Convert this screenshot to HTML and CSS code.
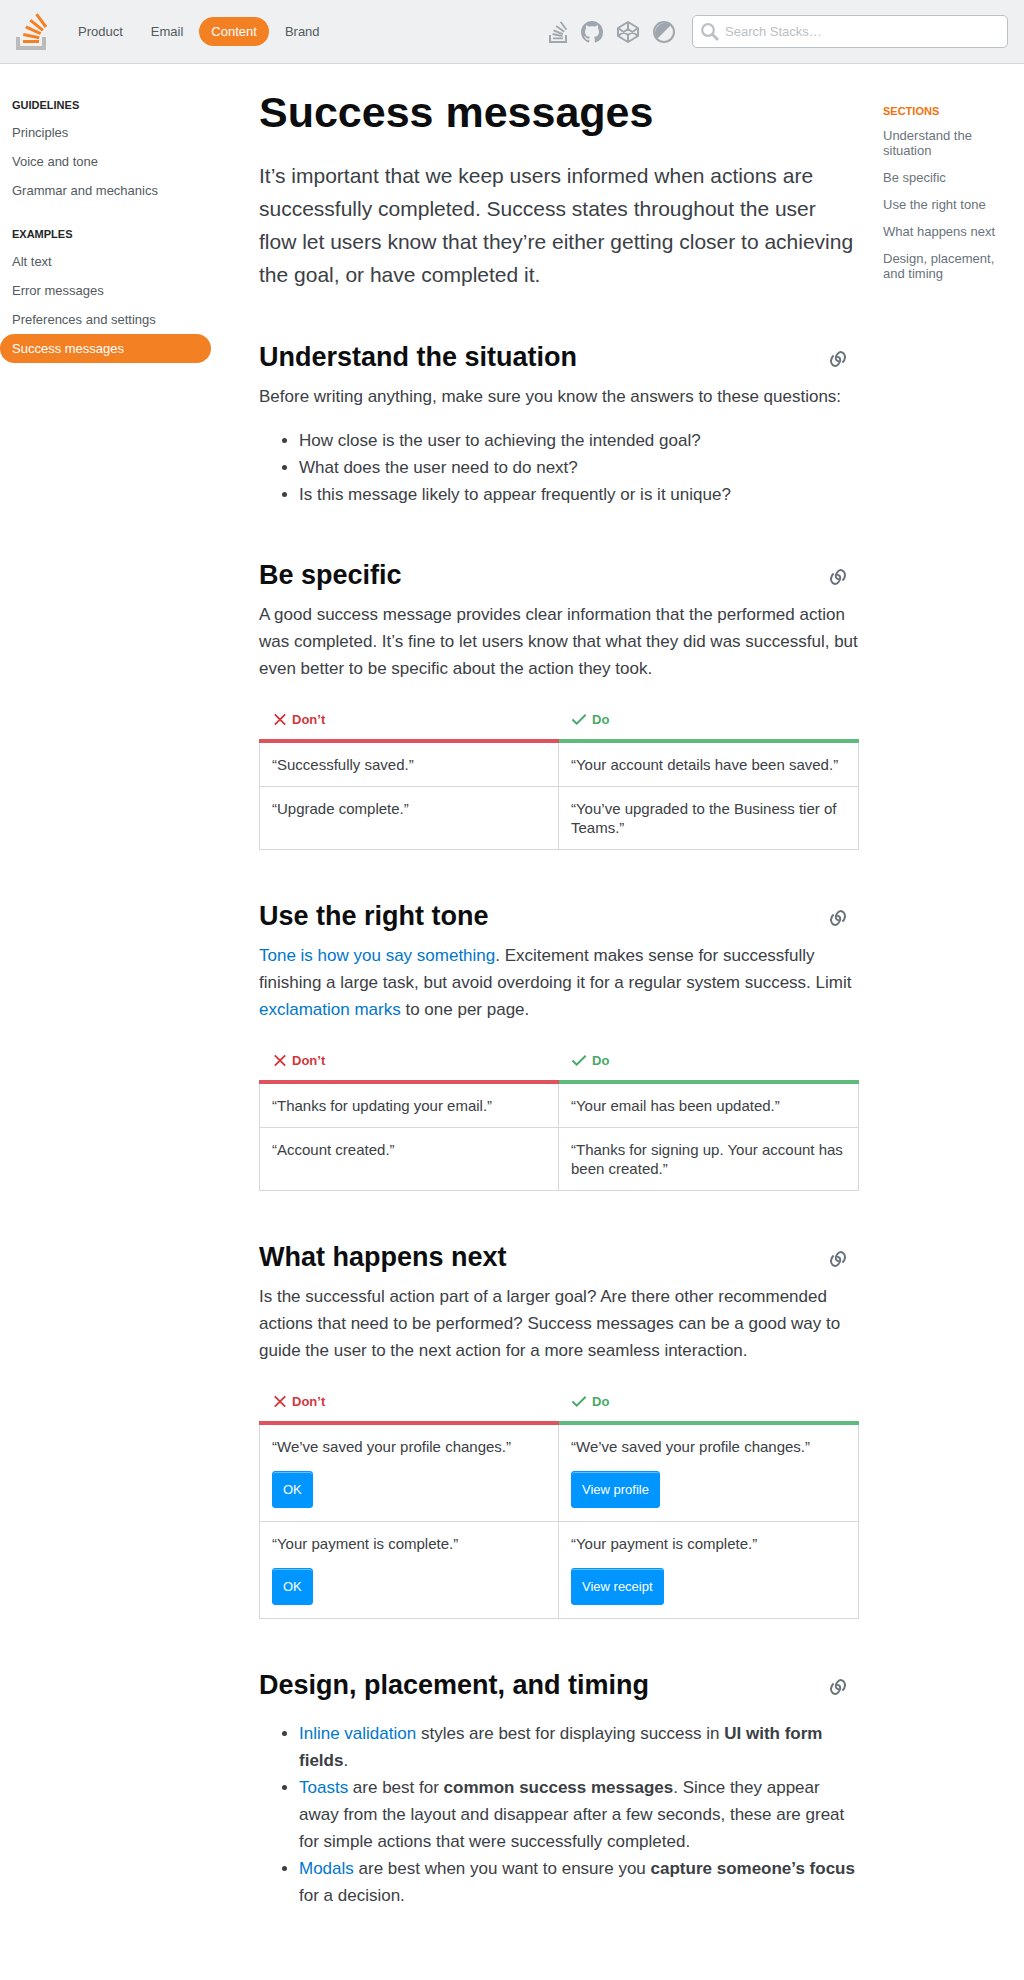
FILE: index.html
```html
<!DOCTYPE html>
<html lang="en">
<head>
<meta charset="utf-8">
<meta name="viewport" content="width=device-width, initial-scale=1">
<title>Success messages - Stacks</title>
<link rel="stylesheet" href="styles.css">
</head>
<body>
<svg class="sprite" aria-hidden="true">
  <symbol id="link" viewBox="0 0 16 18">
    <g fill="none" stroke="currentColor" stroke-width="2">
      <path d="M12.400 12.600C14.600 10.600 15.400 7.400 14.600 5 13.400 1.800 10.200 1.200 8 3.400 5.800 5.600 5 8.800 6.800 10.400 7.400 11 8.200 11.200 9 10.800"/>
      <path d="M3.600 5.400C1.400 7.400 .6 10.600 1.400 13 2.600 16.200 5.800 16.800 8 14.600 10.200 12.400 11 9.200 9.200 7.600 8.600 7 7.800 6.800 7 7.200"/>
    </g>
  </symbol>
  <symbol id="cross" viewBox="0 0 18 18"><path d="M3.500 3.500 14.500 14.500M14.500 3.500 3.500 14.500" fill="none" stroke="currentColor" stroke-width="2"/></symbol>
  <symbol id="check" viewBox="0 0 18 18"><path d="M1 9 5.500 13.500 15 4" fill="none" stroke="currentColor" stroke-width="2"/></symbol>
</svg>

<header class="topbar">
  <a class="logo" href="#" aria-label="Stacks home">
    <svg width="32" height="38" viewBox="0 0 32 38" fill="none">
      <path d="M2 24V35H28V24" stroke="#bcbbbb" stroke-width="4"/>
      <path d="M7 28.500H23M7.300 21.500 23.300 24.800M9.800 13.800 24.600 20.700M14.300 7.200 26.900 17.300M20.500 1.200 30 14" stroke="#f48024" stroke-width="3"/>
    </svg>
  </a>
  <nav class="mainnav" aria-label="Main">
    <a class="pill" href="#">Product</a>
    <a class="pill" href="#">Email</a>
    <a class="pill active" href="#" aria-current="page">Content</a>
    <a class="pill" href="#">Brand</a>
  </nav>
  <div class="tools">
    <a href="#" aria-label="Stack Overflow"><svg width="22" height="22" viewBox="0 0 22 22" fill="none" stroke="currentColor"><path d="M5 14V21H21V14" stroke-width="2"/><path d="M8 17.300H18M7.600 13 17.500 15.200M8.600 9.300 17.800 13.200M11.200 5 19.200 10.800M15.600 .8 21.400 8.600" stroke-width="1.800"/></svg></a>
    <a href="#" aria-label="GitHub"><svg width="22" height="22" viewBox="0 0 16 16" fill="currentColor"><path d="M8 0C3.580 0 0 3.580 0 8c0 3.540 2.290 6.530 5.470 7.590.4.070.55-.17.55-.38 0-.19-.01-.82-.01-1.490-2.010.37-2.530-.49-2.690-.94-.09-.23-.48-.94-.82-1.130-.28-.15-.68-.52-.01-.53.63-.01 1.080.58 1.230.82.72 1.210 1.870.87 2.330.66.07-.52.28-.87.51-1.070-1.780-.2-3.640-.89-3.640-3.950 0-.87.31-1.590.82-2.150-.08-.2-.36-1.020.08-2.120 0 0 .67-.21 2.200.82.64-.18 1.320-.27 2-.27s1.360.09 2 .27c1.530-1.040 2.200-.82 2.200-.82.44 1.100.16 1.920.08 2.120.51.56.82 1.270.82 2.150 0 3.070-1.870 3.750-3.650 3.950.29.25.54.73.54 1.480 0 1.070-.01 1.930-.01 2.200 0 .21.15.46.55.38A8.010 8.010 0 0 0 16 8c0-4.420-3.580-8-8-8z"/></svg></a>
    <a href="#" aria-label="CodePen"><svg width="22" height="22" viewBox="0 0 22 22" fill="none" stroke="currentColor" stroke-width="2" stroke-linejoin="round"><path d="M11 1 21 7V15L11 21 1 15V7ZM11 1V8M11 14V21M1 7 11 14 21 7M1 15 11 8 21 15"/></svg></a>
    <button class="theme" type="button" aria-label="Switch theme"><svg width="22" height="22" viewBox="0 0 22 22"><circle cx="11" cy="11" r="10" fill="none" stroke="currentColor" stroke-width="2"/><path d="M18 4A10 10 0 0 0 4 18Z" fill="currentColor"/></svg></button>
  </div>
  <form class="search" role="search">
    <svg width="18" height="18" viewBox="0 0 18 18" fill="none" stroke="currentColor"><circle cx="7" cy="7" r="5.800" stroke-width="2.200"/><path d="M11 11 17 17" stroke-width="2.800"/></svg>
    <input type="search" placeholder="Search Stacks…" aria-label="Search Stacks">
  </form>
</header>

<div class="layout">
  <nav class="sidebar" aria-label="Content">
    <h2 class="label">Guidelines</h2>
    <ul>
      <li><a href="#">Principles</a></li>
      <li><a href="#">Voice and tone</a></li>
      <li><a href="#">Grammar and mechanics</a></li>
    </ul>
    <h2 class="label">Examples</h2>
    <ul>
      <li><a href="#">Alt text</a></li>
      <li><a href="#">Error messages</a></li>
      <li><a href="#">Preferences and settings</a></li>
      <li><a class="active" href="#" aria-current="page">Success messages</a></li>
    </ul>
  </nav>

  <main class="content">
    <h1>Success messages</h1>
    <p class="lead">It’s important that we keep users informed when actions are successfully completed. Success states throughout the user flow let users know that they’re either getting closer to achieving the goal, or have completed it.</p>

    <section id="understand">
      <div class="heading"><h2>Understand the situation</h2><a href="#understand" aria-label="Link to Understand the situation"><svg width="16" height="18"><use href="#link"/></svg></a></div>
      <p>Before writing anything, make sure you know the answers to these questions:</p>
      <ul>
        <li>How close is the user to achieving the intended goal?</li>
        <li>What does the user need to do next?</li>
        <li>Is this message likely to appear frequently or is it unique?</li>
      </ul>
    </section>

    <section id="specific">
      <div class="heading"><h2>Be specific</h2><a href="#specific" aria-label="Link to Be specific"><svg width="16" height="18"><use href="#link"/></svg></a></div>
      <p>A good success message provides clear information that the performed action was completed. It’s fine to let users know that what they did was successful, but even better to be specific about the action they took.</p>
      <table>
        <thead><tr>
          <th class="dont" scope="col"><span><svg width="18" height="17"><use href="#cross"/></svg>Don’t</span></th>
          <th class="do" scope="col"><span><svg width="18" height="17"><use href="#check"/></svg>Do</span></th>
        </tr></thead>
        <tbody>
          <tr><td>“Successfully saved.”</td><td>“Your account details have been saved.”</td></tr>
          <tr><td>“Upgrade complete.”</td><td>“You’ve upgraded to the Business tier of Teams.”</td></tr>
        </tbody>
      </table>
    </section>

    <section id="tone">
      <div class="heading"><h2>Use the right tone</h2><a href="#tone" aria-label="Link to Use the right tone"><svg width="16" height="18"><use href="#link"/></svg></a></div>
      <p><a href="#">Tone is how you say something</a>. Excitement makes sense for successfully finishing a large task, but avoid overdoing it for a regular system success. Limit <a href="#">exclamation marks</a> to one per page.</p>
      <table>
        <thead><tr>
          <th class="dont" scope="col"><span><svg width="18" height="17"><use href="#cross"/></svg>Don’t</span></th>
          <th class="do" scope="col"><span><svg width="18" height="17"><use href="#check"/></svg>Do</span></th>
        </tr></thead>
        <tbody>
          <tr><td>“Thanks for updating your email.”</td><td>“Your email has been updated.”</td></tr>
          <tr><td>“Account created.”</td><td>“Thanks for signing up. Your account has been created.”</td></tr>
        </tbody>
      </table>
    </section>

    <section id="next">
      <div class="heading"><h2>What happens next</h2><a href="#next" aria-label="Link to What happens next"><svg width="16" height="18"><use href="#link"/></svg></a></div>
      <p>Is the successful action part of a larger goal? Are there other recommended actions that need to be performed? Success messages can be a good way to guide the user to the next action for a more seamless interaction.</p>
      <table>
        <thead><tr>
          <th class="dont" scope="col"><span><svg width="18" height="17"><use href="#cross"/></svg>Don’t</span></th>
          <th class="do" scope="col"><span><svg width="18" height="17"><use href="#check"/></svg>Do</span></th>
        </tr></thead>
        <tbody>
          <tr><td><p>“We’ve saved your profile changes.”</p><button class="btn" type="button">OK</button></td><td><p>“We’ve saved your profile changes.”</p><button class="btn" type="button">View profile</button></td></tr>
          <tr><td><p>“Your payment is complete.”</p><button class="btn" type="button">OK</button></td><td><p>“Your payment is complete.”</p><button class="btn" type="button">View receipt</button></td></tr>
        </tbody>
      </table>
    </section>

    <section id="design">
      <div class="heading"><h2>Design, placement, and timing</h2><a href="#design" aria-label="Link to Design, placement, and timing"><svg width="16" height="18"><use href="#link"/></svg></a></div>
      <ul>
        <li><a href="#">Inline validation</a> styles are best for displaying success in <strong>UI with form fields</strong>.</li>
        <li><a href="#">Toasts</a> are best for <strong>common success messages</strong>. Since they appear away from the layout and disappear after a few seconds, these are great for simple actions that were successfully completed.</li>
        <li><a href="#">Modals</a> are best when you want to ensure you <strong>capture someone’s focus</strong> for a decision.</li>
      </ul>
    </section>
  </main>

  <nav class="toc" aria-label="Sections">
    <h2 class="label">Sections</h2>
    <ul>
      <li><a href="#understand">Understand the situation</a></li>
      <li><a href="#specific">Be specific</a></li>
      <li><a href="#tone">Use the right tone</a></li>
      <li><a href="#next">What happens next</a></li>
      <li><a href="#design">Design, placement, and timing</a></li>
    </ul>
  </nav>
</div>
</body>
</html>
```
FILE: styles.css
```css
*, *::before, *::after { box-sizing: border-box; }

body {
  margin: 0;
  background: #fff;
  color: #3b4045;
  font: 13px/17px "Liberation Sans", Arial, sans-serif;
}

h1, h2, p, ul { margin: 0; padding: 0; }
a { color: #0077cc; text-decoration: none; }
svg { display: block; flex: none; }
.sprite { position: absolute; width: 0; height: 0; }

/* Top bar */
.topbar {
  display: flex;
  align-items: center;
  height: 64px;
  padding: 0 16px;
  background: #eff0f1;
  border-bottom: 1px solid #d6d9dc;
}
.mainnav { display: flex; gap: 4px; margin-left: 18px; }
.pill {
  padding: 0 12px;
  border-radius: 15px;
  color: #535a60;
  line-height: 29px;
}
.active, .pill.active { background: #f48024; color: #fff; }
.tools {
  display: flex;
  gap: 14px;
  margin-left: auto;
  color: #9fa6ad;
}
.tools a { color: inherit; }
.theme { padding: 0; border: 0; background: none; color: inherit; }
.search {
  display: flex;
  align-items: center;
  gap: 6px;
  flex: 0 0 316px;
  height: 33px;
  margin-left: 17px;
  padding: 0 8px;
  border: 1px solid #bbc0c4;
  border-radius: 5px;
  background: #fff;
  color: #bbc0c4;
}
.search input {
  flex: 1;
  min-width: 0;
  padding: 0;
  border: 0;
  outline: 0;
  background: none;
  font: inherit;
}
.search input::placeholder { color: #bbc0c4; opacity: 1; }

/* Columns */
.layout {
  display: grid;
  grid-template-columns: 211px minmax(0, 1fr) 117px;
  align-items: start;
  padding-right: 24px;
}

.label {
  font-size: 11px;
  line-height: 13px;
  text-transform: uppercase;
}

.sidebar { padding-top: 35px; }
.sidebar .label { padding: 0 12px 6px; color: #242729; }
.sidebar ul { margin-bottom: 23px; list-style: none; }
.sidebar a {
  display: block;
  padding: 0 12px;
  border-radius: 15px;
  color: #535a60;
  line-height: 29px;
}
.sidebar a.active { color: #fff; }

.toc { padding-top: 41px; }
.toc .label { color: #f2720c; }
.toc ul {
  display: grid;
  gap: 12px;
  margin-top: 10px;
  list-style: none;
  line-height: 15px;
}
.toc a { color: #6a737c; }

/* Article */
.content {
  padding: 22px 24px 48px 48px;
  font-size: 17px;
  line-height: 27px;
}
.content h1 {
  margin-bottom: 21px;
  color: #0c0d0e;
  font-size: 43px;
  line-height: 52px;
}
.lead { padding-right: 4px; font-size: 21px; line-height: 33px; }
.content section { margin-top: 49px; }
.heading {
  display: flex;
  align-items: center;
  justify-content: space-between;
  margin-bottom: 8px;
  padding-right: 13px;
}
.heading h2 { color: #0c0d0e; font-size: 27px; line-height: 35px; }
.heading a { padding-top: 3px; color: #6a737c; }
.content ul { margin-top: 17px; padding: 0 0 1px 40px; }

table {
  width: 100%;
  margin-top: 17px;
  border-collapse: separate;
  border-spacing: 0;
  table-layout: fixed;
  font-size: 15px;
  line-height: 19px;
}
th {
  padding: 12px 12px 11px;
  border-bottom: 4px solid;
  font-size: 13px;
  line-height: 17px;
  text-align: left;
}
th span { display: flex; align-items: center; gap: 3px; }
.dont { border-color: #de535e; color: #d1383d; }
.do { border-color: #5eba7d; color: #48a868; }
td {
  padding: 12px;
  border: solid #d6d9dc;
  border-width: 0 1px 1px 0;
  vertical-align: top;
}
td:first-child { border-left-width: 1px; }
.btn {
  display: block;
  margin: 15px 0 1px;
  padding: 9px 10px;
  border: 1px solid #0095ff;
  border-radius: 3px;
  background: #0095ff;
  box-shadow: inset 0 1px 0 rgba(255, 255, 255, 0.4);
  color: #fff;
  font: inherit;
  font-size: 13px;
  line-height: 17px;
}
```
